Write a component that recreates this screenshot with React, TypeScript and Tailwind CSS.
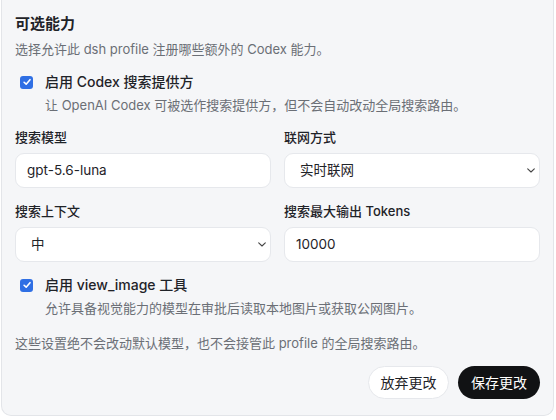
const font = { fontFamily: 'Inter, "Noto Sans CJK SC", "Noto Sans", sans-serif' };

const Check = () => (
  <span className="flex h-[13px] w-[13px] shrink-0 items-center justify-center rounded-[3px] bg-[#2f6fe4]">
    <svg viewBox="0 0 12 12" className="h-[10px] w-[10px]" fill="none">
      <path d="M2.5 6.3 L5 8.6 L9.6 3.2" stroke="white" strokeWidth="1.9" strokeLinecap="round" strokeLinejoin="round" />
    </svg>
  </span>
);

const Chevron = () => (
  <svg viewBox="0 0 8 5" className="h-[5px] w-[8px]" fill="none">
    <path d="M0.7 0.8 L4 4 L7.3 0.8" stroke="#444" strokeWidth="1.1" strokeLinecap="round" strokeLinejoin="round" />
  </svg>
);

const Field = ({ label, value, select }: { label: string; value: string; select?: boolean }) => (
  <div className="flex flex-col">
    <div className="text-[13px] font-medium leading-[20px] text-[#1f2328]">{label}</div>
    <div className="mt-[6px] flex h-[35px] items-center justify-between rounded-[9px] border border-[#e6e8ec] bg-white pr-[4px] text-[13.5px] text-[#1f2328]">
      <span className={select ? 'pl-[15px]' : 'pl-[11px]'}>{value}</span>
      {select && <Chevron />}
    </div>
  </div>
);

const Toggle = ({ label, desc }: { label: string; desc: string }) => (
  <div>
    <div className="flex items-center">
      <span className="ml-[5px]"><Check /></span>
      <span className="ml-[12px] text-[14px] font-medium leading-[20px] text-[#1f2328]">{label}</span>
    </div>
    <div className="mt-[3px] pl-[30px] text-[13px] leading-[20px] text-[#6b6f76]">{desc}</div>
  </div>
);

export default function App() {
  return (
    <div className="h-[420px] w-[556px] overflow-hidden bg-white" style={font}>
      <div className="ml-px w-[553px] rounded-b-[10px] border-x border-b border-[#e3e5e9] bg-[#f5f6f8] px-[13px] pb-[16px] pt-[13px]">
        <div className="text-[15px] font-semibold leading-[22px] text-[#1f2328]">可选能力</div>
        <div className="mt-[4px] text-[13px] leading-[20px] text-[#6b6f76]">选择允许此 dsh profile 注册哪些额外的 Codex 能力。</div>

        <div className="mt-[13px]">
          <Toggle label="启用 Codex 搜索提供方" desc="让 OpenAI Codex 可被选作搜索提供方，但不会自动改动全局搜索路由。" />
        </div>

        <div className="mt-[12px] grid grid-cols-2 gap-x-[13px] gap-y-[13px]">
          <Field label="搜索模型" value="gpt-5.6-luna" />
          <Field label="联网方式" value="实时联网" select />
          <Field label="搜索上下文" value="中" select />
          <Field label="搜索最大输出 Tokens" value="10000" />
        </div>

        <div className="mt-[13px]">
          <Toggle label="启用 view_image 工具" desc="允许具备视觉能力的模型在审批后读取本地图片或获取公网图片。" />
        </div>

        <div className="mt-[15px] text-[13px] leading-[20px] text-[#6b6f76]">这些设置绝不会改动默认模型，也不会接管此 profile 的全局搜索路由。</div>

        <div className="mt-[13px] flex justify-end gap-[9px]">
          <button className="h-[33px] w-[81px] rounded-full border border-[#e6e8ec] bg-white text-[14px] text-[#1f2328]">放弃更改</button>
          <button className="h-[33px] w-[82px] rounded-full bg-[#111214] text-[14px] text-white">保存更改</button>
        </div>
      </div>
    </div>
  );
}
